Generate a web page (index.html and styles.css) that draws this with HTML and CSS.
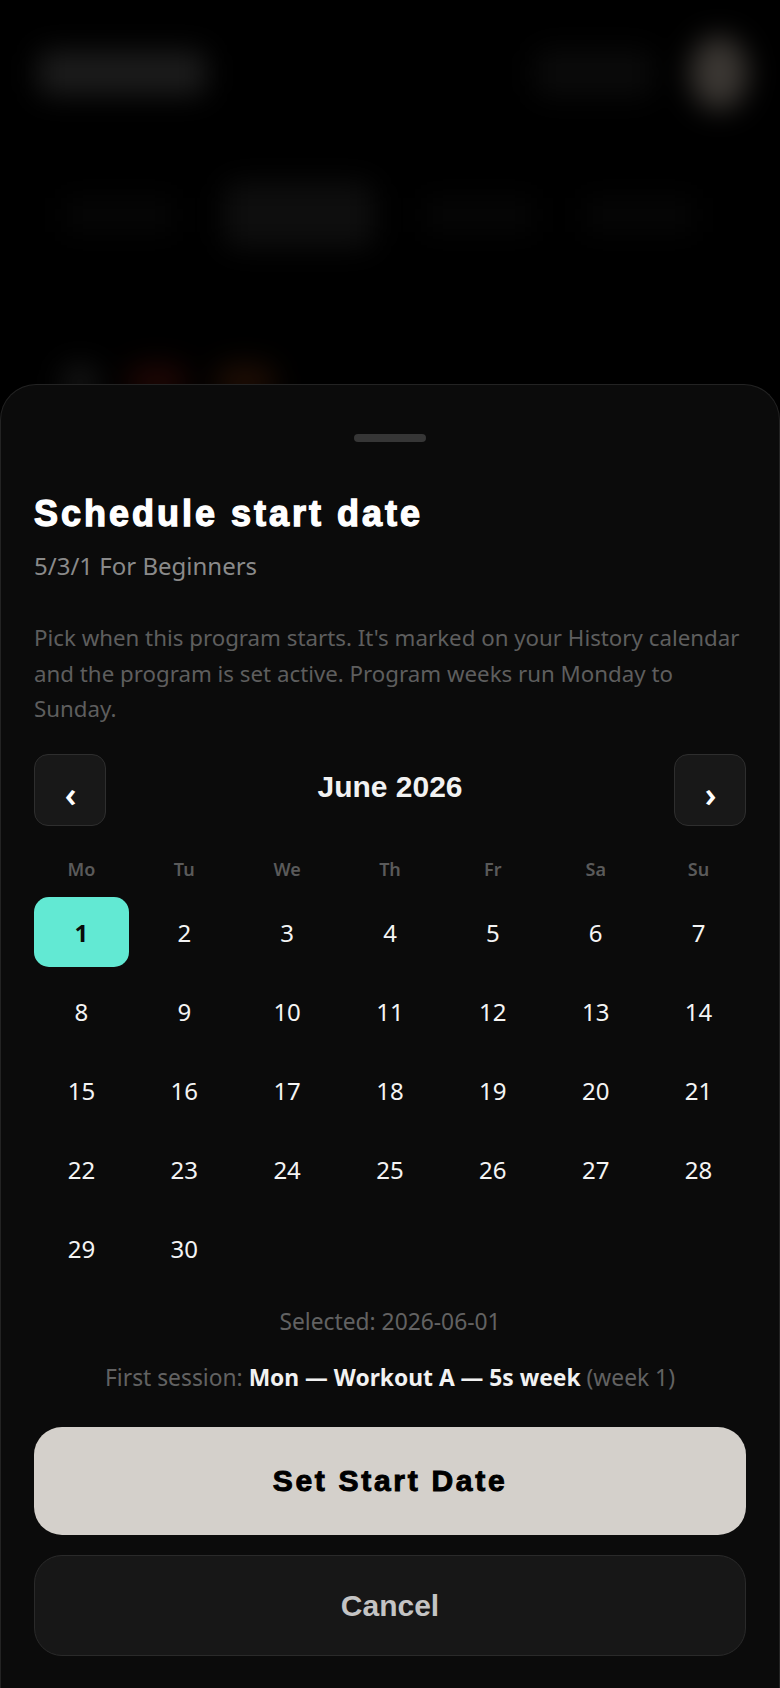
FILE: index.html
```html
<!DOCTYPE html>
<html lang="en">
<head>
    <meta charset="UTF-8">
    <meta name="viewport" content="width=device-width, initial-scale=1.0">
    <title>Schedule start date</title>
    <link rel="stylesheet" href="styles.css">
</head>
<body>

    <!-- page behind the sheet, blurred out -->
    <div class="page">
        <header class="page-top">
            <div class="brand"></div>
            <div class="top-right">
                <div class="pill"></div>
                <div class="avatar"></div>
            </div>
        </header>
        <nav class="tabs">
            <span class="tab"></span>
            <span class="tab active"></span>
            <span class="tab"></span>
            <span class="tab"></span>
        </nav>
        <div class="tags">
            <span class="tag grey"></span>
            <span class="tag red"></span>
            <span class="tag orange"></span>
        </div>
    </div>

    <section class="sheet">
        <div class="handle"></div>
        <h1 class="sheet-title">Schedule start date</h1>
        <p class="sheet-sub">5/3/1 For Beginners</p>
        <p class="sheet-desc">Pick when this program starts. It's marked on your History calendar and the program is set active. Program weeks run Monday to Sunday.</p>

        <div class="cal-nav">
            <button class="nav-btn">&lsaquo;</button>
            <div class="month">June 2026</div>
            <button class="nav-btn">&rsaquo;</button>
        </div>

        <div class="weekdays">
            <span>Mo</span><span>Tu</span><span>We</span><span>Th</span><span>Fr</span><span>Sa</span><span>Su</span>
        </div>

        <div class="days">
            <button class="day active">1</button>
            <button class="day">2</button>
            <button class="day">3</button>
            <button class="day">4</button>
            <button class="day">5</button>
            <button class="day">6</button>
            <button class="day">7</button>
            <button class="day">8</button>
            <button class="day">9</button>
            <button class="day">10</button>
            <button class="day">11</button>
            <button class="day">12</button>
            <button class="day">13</button>
            <button class="day">14</button>
            <button class="day">15</button>
            <button class="day">16</button>
            <button class="day">17</button>
            <button class="day">18</button>
            <button class="day">19</button>
            <button class="day">20</button>
            <button class="day">21</button>
            <button class="day">22</button>
            <button class="day">23</button>
            <button class="day">24</button>
            <button class="day">25</button>
            <button class="day">26</button>
            <button class="day">27</button>
            <button class="day">28</button>
            <button class="day">29</button>
            <button class="day">30</button>
        </div>

        <p class="selected">Selected: 2026-06-01</p>
        <p class="first-session">First session: <b>Mon &mdash; Workout A &mdash; 5s week</b> (week 1)</p>

        <button class="btn-primary">Set Start Date</button>
        <button class="btn-cancel">Cancel</button>
    </section>

</body>
</html>
```

FILE: styles.css
```css
* {
    box-sizing: border-box;
}
body {
    margin: 0;
    height: 1688px;
    overflow: hidden;
    position: relative;
    background: #000;
    color: #fff;
    font-family: "Noto Sans", "Open Sans", sans-serif;
}
button {
    font-family: inherit;
    cursor: pointer;
}

/* blurred page under the sheet */
.page {
    filter: blur(14px);
}
.page-top {
    display: flex;
    justify-content: space-between;
    align-items: center;
    padding: 36px 32px 0 38px;
}
.brand {
    width: 168px;
    height: 44px;
    border-radius: 10px;
    background: #1c1c1c;
}
.top-right {
    display: flex;
    align-items: center;
    gap: 36px;
}
.pill {
    width: 120px;
    height: 48px;
    border-radius: 12px;
    background: #0a0a0a;
}
.avatar {
    width: 58px;
    height: 74px;
    border-radius: 50%;
    background: #3b3733;
}
.tabs {
    display: flex;
    align-items: center;
    gap: 50px;
    margin: 72px 40px 0 64px;
}
.tab {
    width: 110px;
    height: 34px;
    background: #060606;
}
.tab.active {
    width: 150px;
    height: 66px;
    border-radius: 12px;
    background: #0e0e0e;
}
.tags {
    display: flex;
    gap: 26px;
    margin: 116px 0 0 60px;
}
.tag {
    width: 62px;
    height: 36px;
    border-radius: 18px;
}
.tag.grey { background: #141414; width: 40px; }
.tag.red { background: #1e0604; }
.tag.orange { background: #1e0d04; }

/* bottom sheet */
.sheet {
    position: absolute;
    top: 384px;
    left: 0;
    right: 0;
    bottom: 0;
    padding: 49px 33px 0;
    background: #0b0b0b;
    border: 1px solid #232323;
    border-bottom: none;
    border-radius: 36px 36px 0 0;
}
.handle {
    width: 72px;
    height: 8px;
    margin: 0 auto;
    border-radius: 4px;
    background: #363636;
}
.sheet-title {
    margin: 50px 0 0;
    font-family: "Liberation Sans", Arial, sans-serif;
    font-size: 36px;
    line-height: 43px;
    font-weight: 700;
    letter-spacing: 3px;
    -webkit-text-stroke: 1.3px #fff;
}
.sheet-sub {
    margin: 15px 0 0;
    font-size: 24px;
    line-height: 32px;
    color: #8a8a8a;
}
.sheet-desc {
    margin: 38px 0 0;
    font-size: 22.3px;
    line-height: 35.7px;
    color: #5e5e5e;
}

/* calendar */
.cal-nav {
    display: flex;
    justify-content: space-between;
    align-items: center;
    margin-top: 27px;
}
.nav-btn {
    width: 72px;
    height: 72px;
    padding: 8px 0 0 1px;
    border: 1.5px solid #2e2e2e;
    border-radius: 14px;
    background: #181818;
    color: #fff;
    font-size: 34px;
    font-weight: 600;
    line-height: 1;
}
.month {
    font-family: "Liberation Sans", Arial, sans-serif;
    font-size: 30px;
    font-weight: 700;
    color: #f2f2f2;
    margin-top: -6px;
}
.weekdays {
    display: grid;
    grid-template-columns: repeat(7, 1fr);
    column-gap: 8px;
    margin-top: 31px;
    font-size: 18px;
    line-height: 24px;
    font-weight: 600;
    color: #5a5a5a;
    text-align: center;
}
.days {
    display: grid;
    grid-template-columns: repeat(7, 1fr);
    column-gap: 8px;
    row-gap: 9px;
    margin-top: 16px;
}
.day {
    height: 70px;
    padding: 0;
    border: none;
    border-radius: 15px;
    background: transparent;
    color: #f4f4f4;
    font-size: 24px;
}
.day.active {
    background: #62e9d3;
    color: #0a0a0a;
    font-weight: 700;
}
.selected,
.first-session {
    margin: 24px 0 0;
    font-size: 22.8px;
    line-height: 30px;
    color: #626262;
    text-align: center;
}
.first-session {
    margin-top: 26px;
}
.first-session b {
    color: #f2f2f2;
}

/* actions */
.btn-primary,
.btn-cancel {
    display: block;
    width: 100%;
    border-radius: 28px;
    font-family: "Liberation Sans", Arial, sans-serif;
    font-size: 30px;
    font-weight: 700;
}
.btn-primary {
    height: 108px;
    margin-top: 34px;
    border: none;
    background: #d4d0cb;
    color: #000;
    letter-spacing: 2.7px;
    -webkit-text-stroke: 1px #000;
}
.btn-cancel {
    height: 101px;
    margin-top: 20px;
    border: 1.5px solid #2a2a2a;
    background: #171717;
    color: #c4c4c4;
}
```
